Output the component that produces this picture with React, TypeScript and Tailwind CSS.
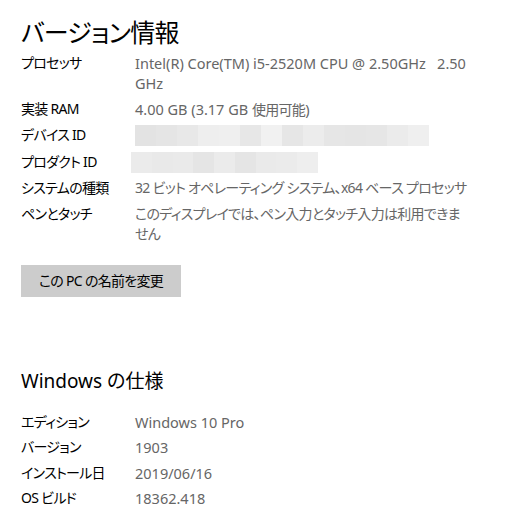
const FONT = "font-['Noto_Sans','Noto_Sans_CJK_JP',sans-serif] [font-feature-settings:'palt']";

const DEVICE_BLOCKS = ["#e3e3e3", "#e5e5e5", "#e8e8e8", "#eeeeee", "#efefef", "#e7e7e7", "#f1f1f1", "#e6e6e6", "#ececec", "#e6e6e6", "#e5e5e5", "#e6e6e6", "#ebebeb", "#efefef"];
const PRODUCT_BLOCKS = ["#ebebeb", "#e9e9e9", "#eaeaea", "#e5e5e5", "#ebebeb", "#e5e5e5", "#eaeaea", "#ebebeb", "#eeeeee"];

// blurred-out identifier
function Redacted({ blocks, width }: { blocks: string[]; width: number }) {
  return (
    <div className="flex h-[21px] overflow-hidden" style={{ width }}>
      {blocks.map((c, i) => (
        <div key={i} className="h-full flex-1" style={{ background: c }} />
      ))}
    </div>
  );
}

// Japanese runs are set a little tighter, like Yu Gothic UI
function Jp({ children }: { children: React.ReactNode }) {
  return <span className="text-[14px] tracking-[-0.05em]">{children}</span>;
}

function Row({ label, children }: { label: string; children: React.ReactNode }) {
  return (
    <>
      <dt className="text-black text-[14px] tracking-[-0.05em]">{label}</dt>
      <dd className="text-[#666666] flex items-center">{children}</dd>
    </>
  );
}

export default function App() {
  return (
    <div className={`w-[529px] h-[514px] bg-white overflow-hidden pl-[21px] ${FONT}`}>
      <h1 className="pt-[13px] text-[25px] leading-[38px] tracking-[-0.03em] text-black font-normal">バージョン情報</h1>

      <dl className="mt-[2px] grid grid-cols-[114px_1fr] gap-y-[5.5px] text-[14.5px] leading-[20px]">
        <Row label="プロセッサ">
          <span className="whitespace-pre">
            {"Intel(R) Core(TM) i5-2520M CPU @ 2.50GHz   2.50"}
            <br />
            GHz
          </span>
        </Row>
        <Row label="実装 RAM">
          <span>
            4.00 GB (3.17 GB <Jp>使用可能</Jp>)
          </span>
        </Row>
        <Row label="デバイス ID">
          <Redacted blocks={DEVICE_BLOCKS} width={294} />
        </Row>
        <Row label="プロダクト ID">
          <div className="-ml-[4px]">
            <Redacted blocks={PRODUCT_BLOCKS} width={187} />
          </div>
        </Row>
        <Row label="システムの種類">
          <Jp>32 ビット オペレーティング システム、x64 ベース プロセッサ</Jp>
        </Row>
        <Row label="ペンとタッチ">
          <Jp>
            このディスプレイでは、ペン入力とタッチ入力は利用できま
            <br />
            せん
          </Jp>
        </Row>
      </dl>

      <button className="mt-[21px] w-[160px] h-[32px] bg-[#cccccc] text-black text-[14px] tracking-[-0.05em] flex items-center justify-center">
        この PC の名前を変更
      </button>

      <h2 className="mt-[70px] text-[19px] leading-[28px] text-black font-normal">Windows の仕様</h2>

      <dl className="mt-[17px] grid grid-cols-[114px_1fr] gap-y-[5.5px] text-[14.5px] leading-[20px]">
        <Row label="エディション">Windows 10 Pro</Row>
        <Row label="バージョン">1903</Row>
        <Row label="インストール日">2019/06/16</Row>
        <Row label="OS ビルド">18362.418</Row>
      </dl>
    </div>
  );
}
